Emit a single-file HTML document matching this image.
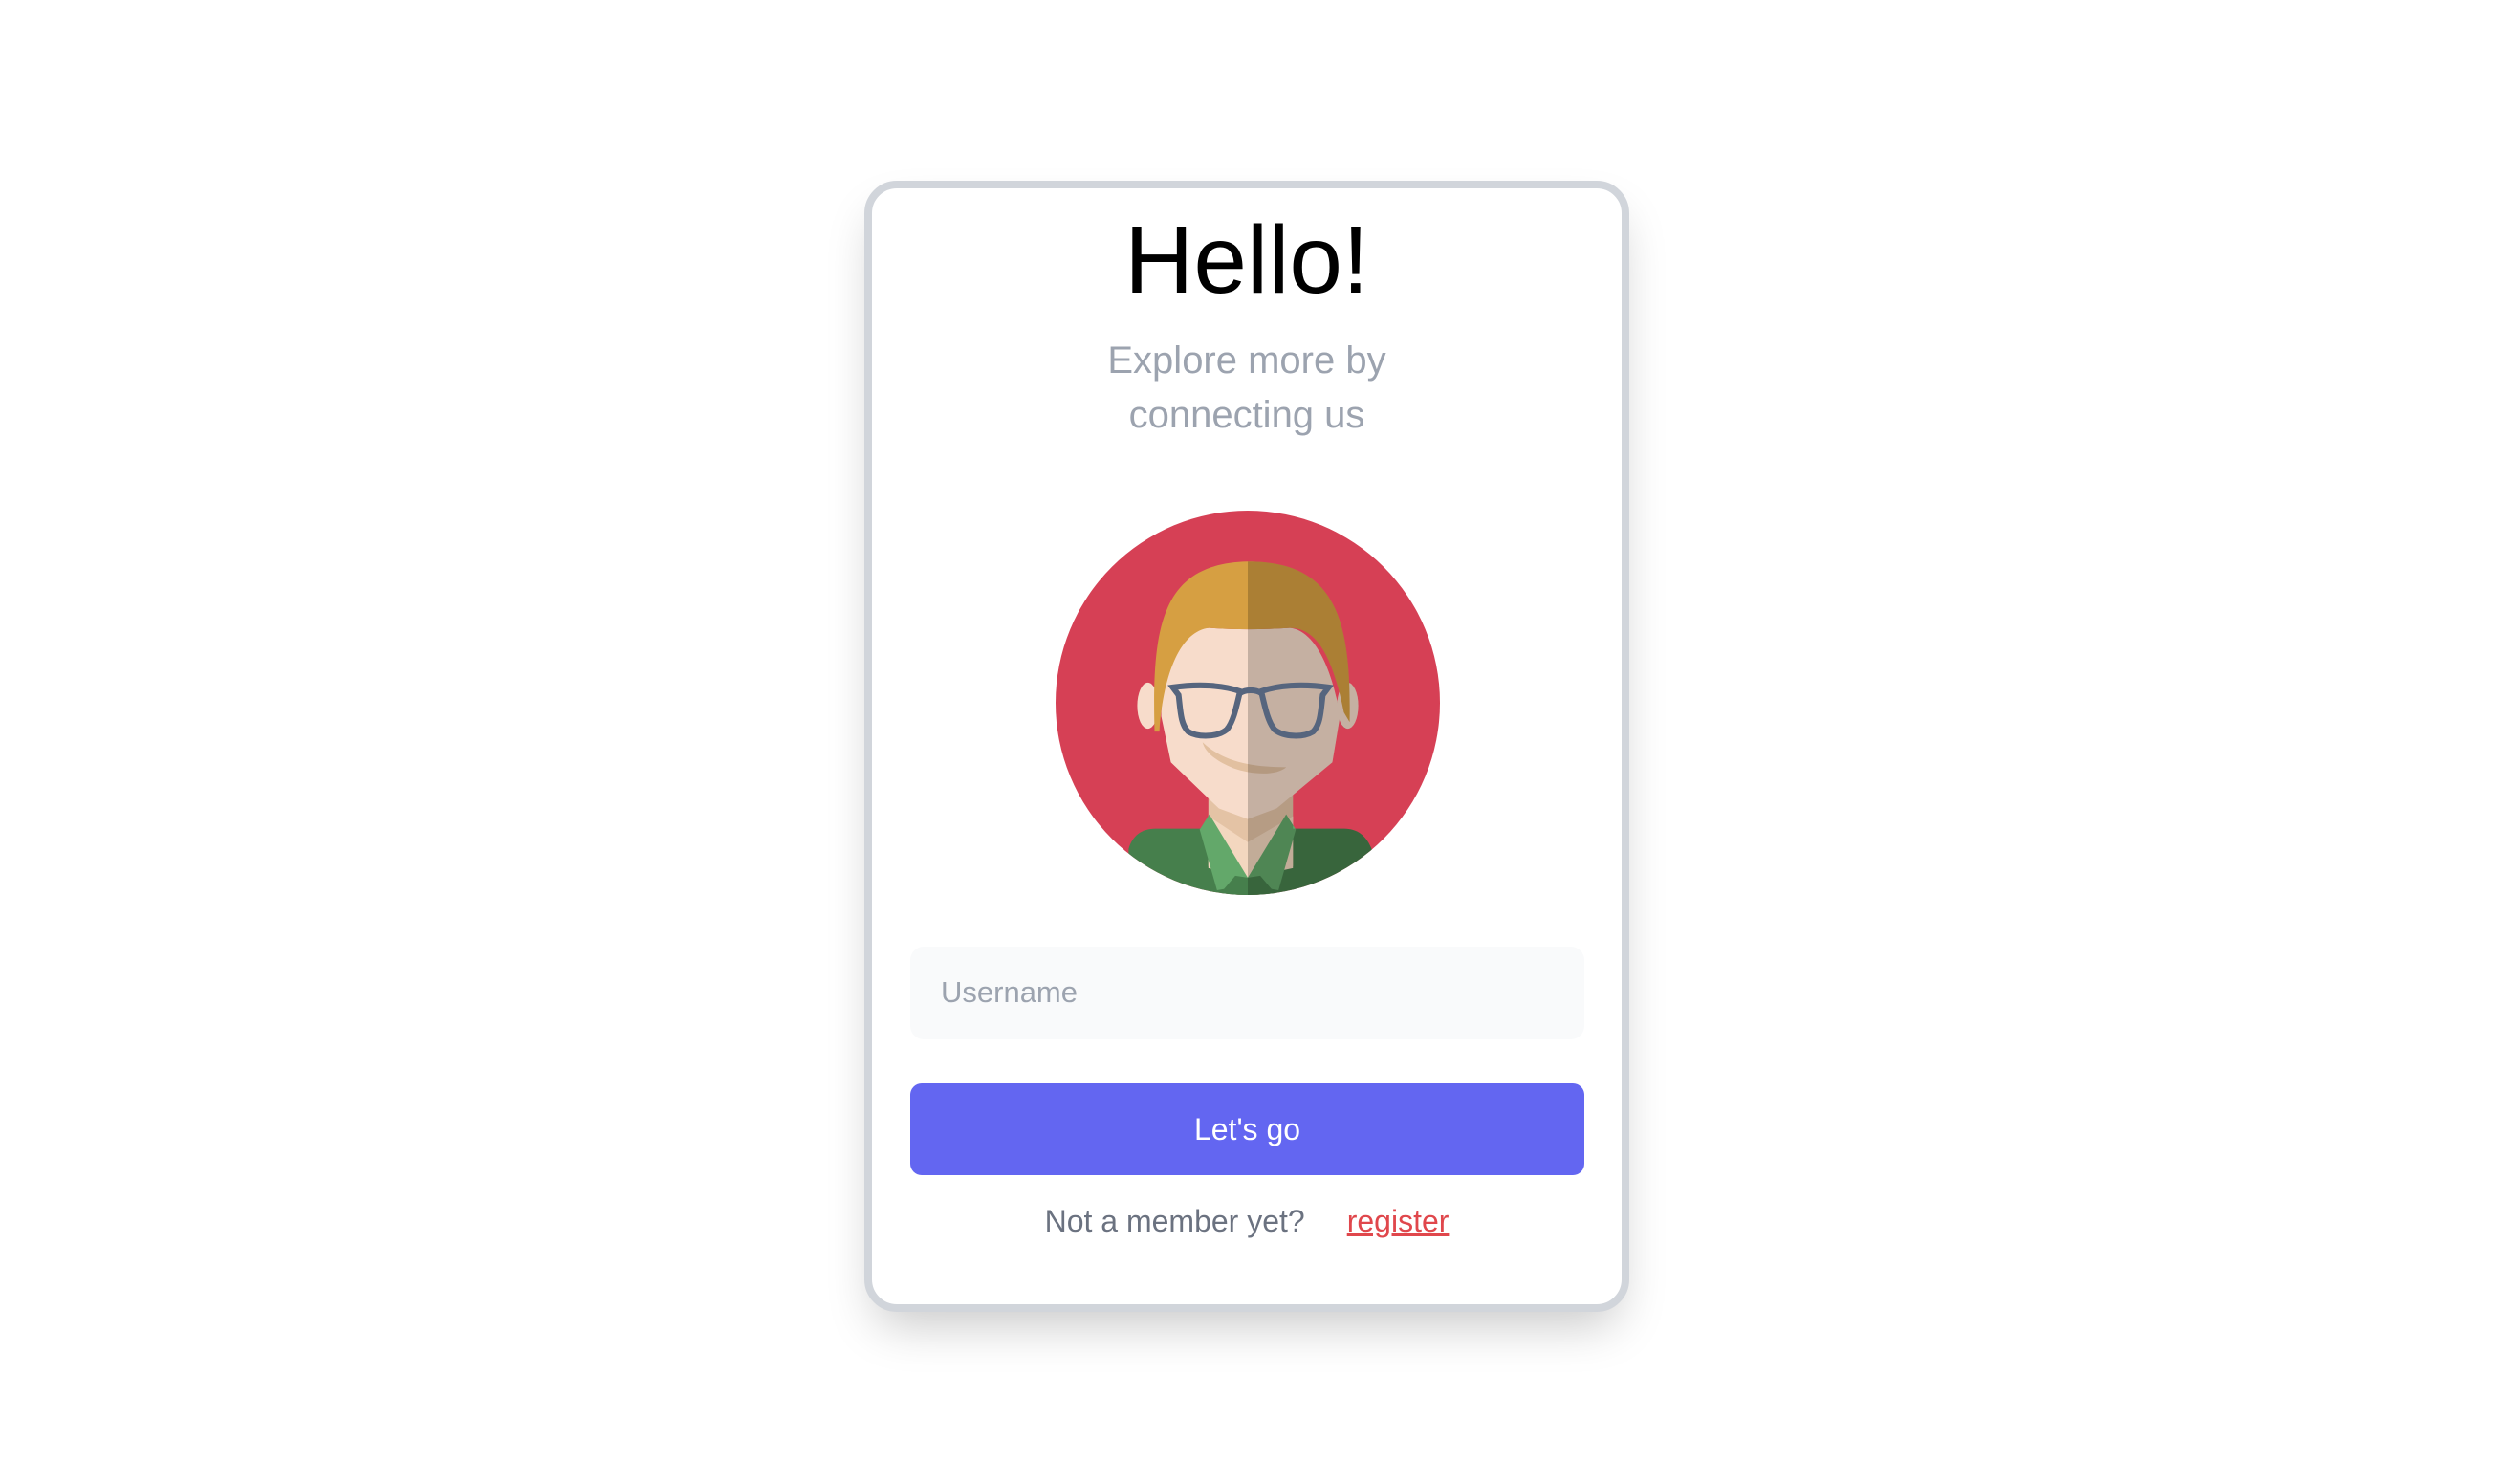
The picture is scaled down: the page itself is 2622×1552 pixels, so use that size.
<!DOCTYPE html>
<html><head><meta charset="utf-8"><style>
html,body{margin:0;padding:0;background:#fff;width:2622px;height:1552px;overflow:hidden;font-family:"Liberation Sans","DejaVu Sans",sans-serif}
.card{position:absolute;left:904px;top:189px;width:784px;height:1167px;border:8px solid #d1d5db;border-radius:34px;background:#fff;box-shadow:0 25px 50px -12px rgba(0,0,0,.22)}
h1{margin:0;position:absolute;left:896px;width:816px;text-align:center;top:212px;font-size:100px;font-weight:normal;color:#000;line-height:120px}
.sub{position:absolute;left:904px;width:800px;top:349px;text-align:center;font-size:40px;line-height:57px;color:#9ca3af}
.inp{position:absolute;left:952px;top:990px;width:705px;height:97px;background:#f9fafb;border-radius:14px}
.inp span{position:absolute;left:32px;top:30px;font-size:31px;color:#9ca3af}
.btn{position:absolute;left:952px;top:1133px;width:705px;height:96px;background:#6366f1;border-radius:12px;color:#fff;font-size:32px;text-align:center;line-height:96px}
.foot{position:absolute;left:904px;width:800px;top:1259px;text-align:center;font-size:32px;color:#6b7280}
.foot a{color:#e0474c;text-decoration:underline;margin-left:44px}
svg{position:absolute;left:1104px;top:534px}
</style></head><body>
<div class="card"></div>
<h1>Hello!</h1>
<div class="sub">Explore more by<br>connecting us</div>
<svg width="402" height="402" viewBox="0 0 400 400">
<defs>
<clipPath id="c"><circle cx="200" cy="200" r="200"/></clipPath>
<clipPath id="fig">
<path d="M110 214 C112 160 130 122 160 122 C185 124 215 124 244 122 C270 125 288 165 296 214 L288 262 L230 310 L200 321 L170 310 L120 262 Z"/>
<path d="M103 230 C100 120 110 55 200 53 C290 53 308 110 306 220 L300 210 C290 160 275 122 244 122 C215 124 185 124 160 122 C130 125 112 170 108 230 Z"/>
<ellipse cx="304" cy="203" rx="11" ry="24"/>
<rect x="159" y="280" width="88" height="100"/>
<path d="M76 400 L76 352 C80 338 90 331 104 331 L300 331 C314 331 324 338 330 355 L330 400 Z"/>
</clipPath>
</defs>
<g clip-path="url(#c)">
<rect width="400" height="400" fill="#d64055"/>
<path d="M76 400 L76 352 C80 338 90 331 104 331 L300 331 C314 331 324 338 330 355 L330 400 Z" fill="#467f4c"/>
<rect x="159" y="280" width="88" height="90" fill="#e4c3a5"/>
<path d="M159 318 L200 345 L247 318 L247 372 L200 382 L159 372 Z" fill="#f3d7bf"/>
<path d="M150 332 L160 316 L200 382 L185 392 L168 395 Z" fill="#63a86a"/>
<path d="M250 332 L240 316 L200 382 L215 392 L232 395 Z" fill="#63a86a"/>
<path d="M170 400 L187 380 L200 382 L213 380 L230 400 Z" fill="#467f4c"/>
<ellipse cx="96" cy="203" rx="11" ry="24" fill="#f7dccb"/>
<ellipse cx="304" cy="203" rx="11" ry="24" fill="#f7dccb"/>
<path d="M110 214 C112 160 130 122 160 122 C185 124 215 124 244 122 C270 125 288 165 296 214 L288 262 L230 310 L200 321 L170 310 L120 262 Z" fill="#f7dccb"/>
<path d="M103 230 C100 120 110 55 200 53 C290 53 308 110 306 220 L300 210 C290 160 275 122 244 122 C215 124 185 124 160 122 C130 125 112 170 108 230 Z" fill="#d69f42"/>
<path d="M153 241 C175 262 205 267 240 267 C230 276 205 275 185 268 C165 260 155 250 153 241 Z" fill="#e2c0a0"/>
<rect x="200" y="0" width="200" height="400" fill="#000" opacity="0.2" clip-path="url(#fig)"/>
<g fill="none" stroke="#56657e" stroke-width="6" stroke-linecap="round">
<path d="M122 184 C150 180 175 182 192 188 C188 205 185 220 178 228 C168 236 148 236 138 230 C130 222 130 208 128 192 Z"/>
<path d="M284 184 C256 180 231 182 214 188 C218 205 221 220 228 228 C238 236 258 236 268 230 C276 222 276 208 278 192 Z"/>
<path d="M192 190 C198 186 208 186 214 190"/>
</g>
</g>
</svg>
<div class="inp"><span>Username</span></div>
<div class="btn">Let's go</div>
<div class="foot">Not a member yet?<a>register</a></div>
</body></html>
